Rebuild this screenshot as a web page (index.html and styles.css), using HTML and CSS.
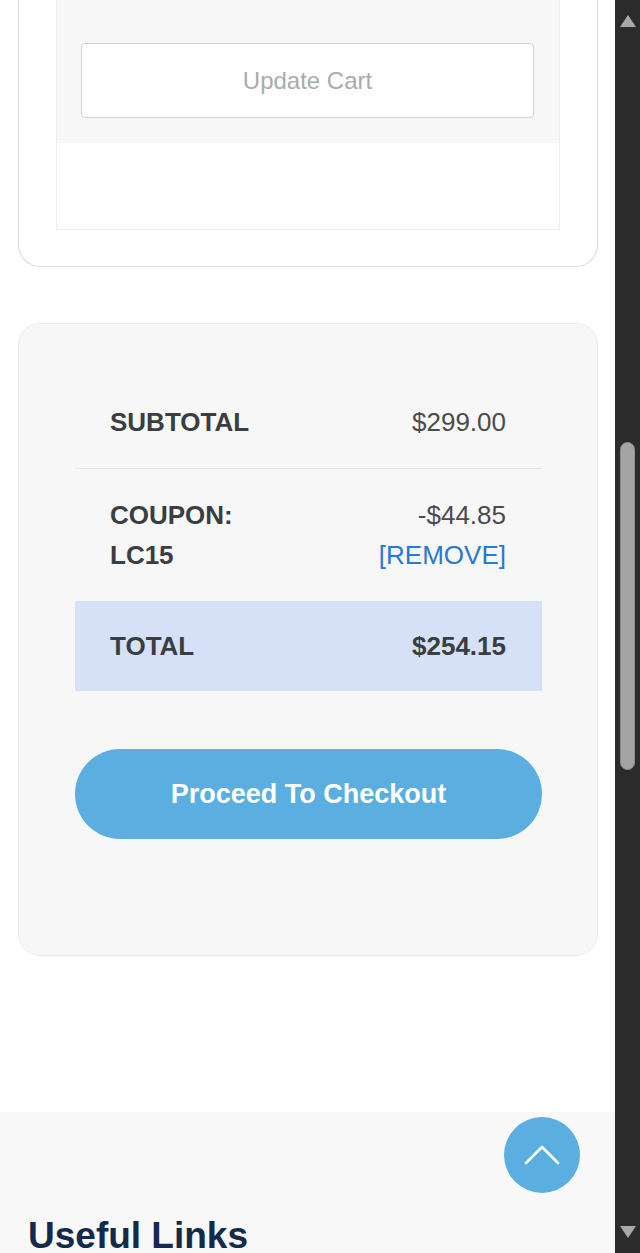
FILE: index.html
```html
<!DOCTYPE html>
<html lang="en">
<head>
<meta charset="utf-8">
<title>Cart</title>
<link rel="stylesheet" href="styles.css">
</head>
<body>
<div class="viewport">
  <main class="page">
    <section class="card cart-card">
      <div class="cart-actions">
        <div class="actions-bar">
          <button class="btn-update" type="button">Update Cart</button>
        </div>
        <div class="actions-blank"></div>
      </div>
    </section>

    <section class="card totals-card">
      <table class="totals">
        <tr class="row-subtotal">
          <th>SUBTOTAL</th>
          <td>$299.00</td>
        </tr>
        <tr class="row-coupon">
          <th>COUPON: LC15</th>
          <td>-$44.85 <a class="remove" href="#">[REMOVE]</a></td>
        </tr>
        <tr class="row-total">
          <th>TOTAL</th>
          <td>$254.15</td>
        </tr>
      </table>
      <a class="btn-checkout" href="#">Proceed To Checkout</a>
    </section>

    <footer class="site-footer">
      <h2>Useful Links</h2>
    </footer>
  </main>

  <div class="scrollbar">
    <div class="sb-arrow sb-up"><span></span></div>
    <div class="sb-track"><div class="sb-thumb"></div></div>
    <div class="sb-arrow sb-down"><span></span></div>
  </div>
</div>

<a class="to-top" href="#" aria-label="Back to top">
  <svg width="76" height="76" viewBox="0 0 76 76">
    <polyline points="22,46 38,30 54,46" fill="none" stroke="#ffffff" stroke-width="2.6" stroke-linecap="round" stroke-linejoin="round"/>
  </svg>
</a>
</body>
</html>
```

FILE: styles.css
```css
* { box-sizing: border-box; }

html, body {
  margin: 0;
  padding: 0;
  background: #ffffff;
}

body {
  font-family: "Liberation Sans", Arial, sans-serif;
  color: #3a3d42;
}

.viewport {
  display: flex;
  width: 640px;
  height: 1253px;
  overflow: hidden;
}

.page {
  width: 615px;
  flex: 0 0 615px;
  height: 1253px;
  overflow: hidden;
  background: #ffffff;
}

/* ---------- cart card (scrolled, top cut off) ---------- */
.card {
  width: 580px;
  margin-left: 18px;
}

.cart-card {
  background: #ffffff;
  border: 1px solid #dadada;
  border-top: none;
  border-radius: 0 0 22px 22px;
  padding: 0 37px 36px 37px;
}

.cart-actions {
  border: 1px solid #eeeeee;
  border-top: none;
}

.actions-bar {
  background: #f7f7f7;
  padding: 43px 25px 25px 24px;
}

.btn-update {
  display: block;
  width: 100%;
  height: 75px;
  background: #ffffff;
  border: 1px solid #d2d2d2;
  border-radius: 4px;
  font-family: "Liberation Sans", Arial, sans-serif;
  font-size: 24px;
  color: #ababab;
  padding: 0;
}

.actions-blank {
  height: 86px;
  background: #ffffff;
}

/* ---------- totals card ---------- */
.totals-card {
  margin-top: 56px;
  background: #f7f7f7;
  border: 1px solid #ebebeb;
  border-radius: 22px;
  padding: 52px 55px 116px 56px;
}

.totals {
  width: 100%;
  border-collapse: collapse;
  font-size: 26px;
  line-height: 40px;
}

.totals th,
.totals td {
  padding: 26px 36px 26px 35px;
  vertical-align: middle;
}

.totals th {
  width: 50%;
  text-align: left;
  font-weight: bold;
  color: #3a3d42;
}

.totals td {
  text-align: right;
  color: #4b4b4b;
}

.row-subtotal th,
.row-subtotal td {
  border-bottom: 1px solid #e7e7e7;
}

.remove {
  display: block;
  color: #2679d4;
  text-decoration: none;
}

.row-total th,
.row-total td {
  background: #d6e1f8;
  padding-top: 25px;
  padding-bottom: 25px;
}

.row-total td {
  font-weight: bold;
  color: #3a3d42;
}

.btn-checkout {
  display: block;
  margin-top: 58px;
  height: 90px;
  border-radius: 45px;
  background: #5aafe0;
  color: #ffffff;
  font-size: 27px;
  font-weight: bold;
  line-height: 90px;
  text-align: center;
  text-decoration: none;
}

/* ---------- footer ---------- */
.site-footer {
  margin-top: 156px;
  background: #f8f8f8;
  padding: 102px 28px 60px 28px;
}

.site-footer h2 {
  margin: 0;
  font-size: 37px;
  line-height: 1.2;
  font-weight: bold;
  color: #142a4c;
}

/* ---------- scrollbar ---------- */
.scrollbar {
  flex: 0 0 25px;
  width: 25px;
  height: 1253px;
  background: #2b2b2b;
  display: flex;
  flex-direction: column;
}

.sb-arrow {
  height: 40px;
  flex: 0 0 40px;
  display: flex;
  justify-content: center;
}

.sb-arrow span {
  width: 0;
  height: 0;
  border-left: 8px solid transparent;
  border-right: 8px solid transparent;
}

.sb-up {
  align-items: flex-start;
  padding-top: 15px;
}

.sb-up span {
  border-bottom: 12px solid #a9a9a9;
}

.sb-down {
  align-items: flex-start;
  padding-top: 13px;
}

.sb-down span {
  border-top: 12px solid #a9a9a9;
}

.sb-track {
  flex: 1;
  padding-top: 402px;
  padding-left: 5px;
}

.sb-thumb {
  width: 15px;
  height: 328px;
  border-radius: 8px;
  background: #a4a4a4;
  border: 1px solid #8d8d8d;
}

/* ---------- back to top (fixed overlay) ---------- */
.to-top {
  position: fixed;
  right: 60px;
  bottom: 60px;
  width: 76px;
  height: 76px;
  border-radius: 50%;
  background: #5aafe0;
  display: block;
}

.to-top svg {
  display: block;
}
```
